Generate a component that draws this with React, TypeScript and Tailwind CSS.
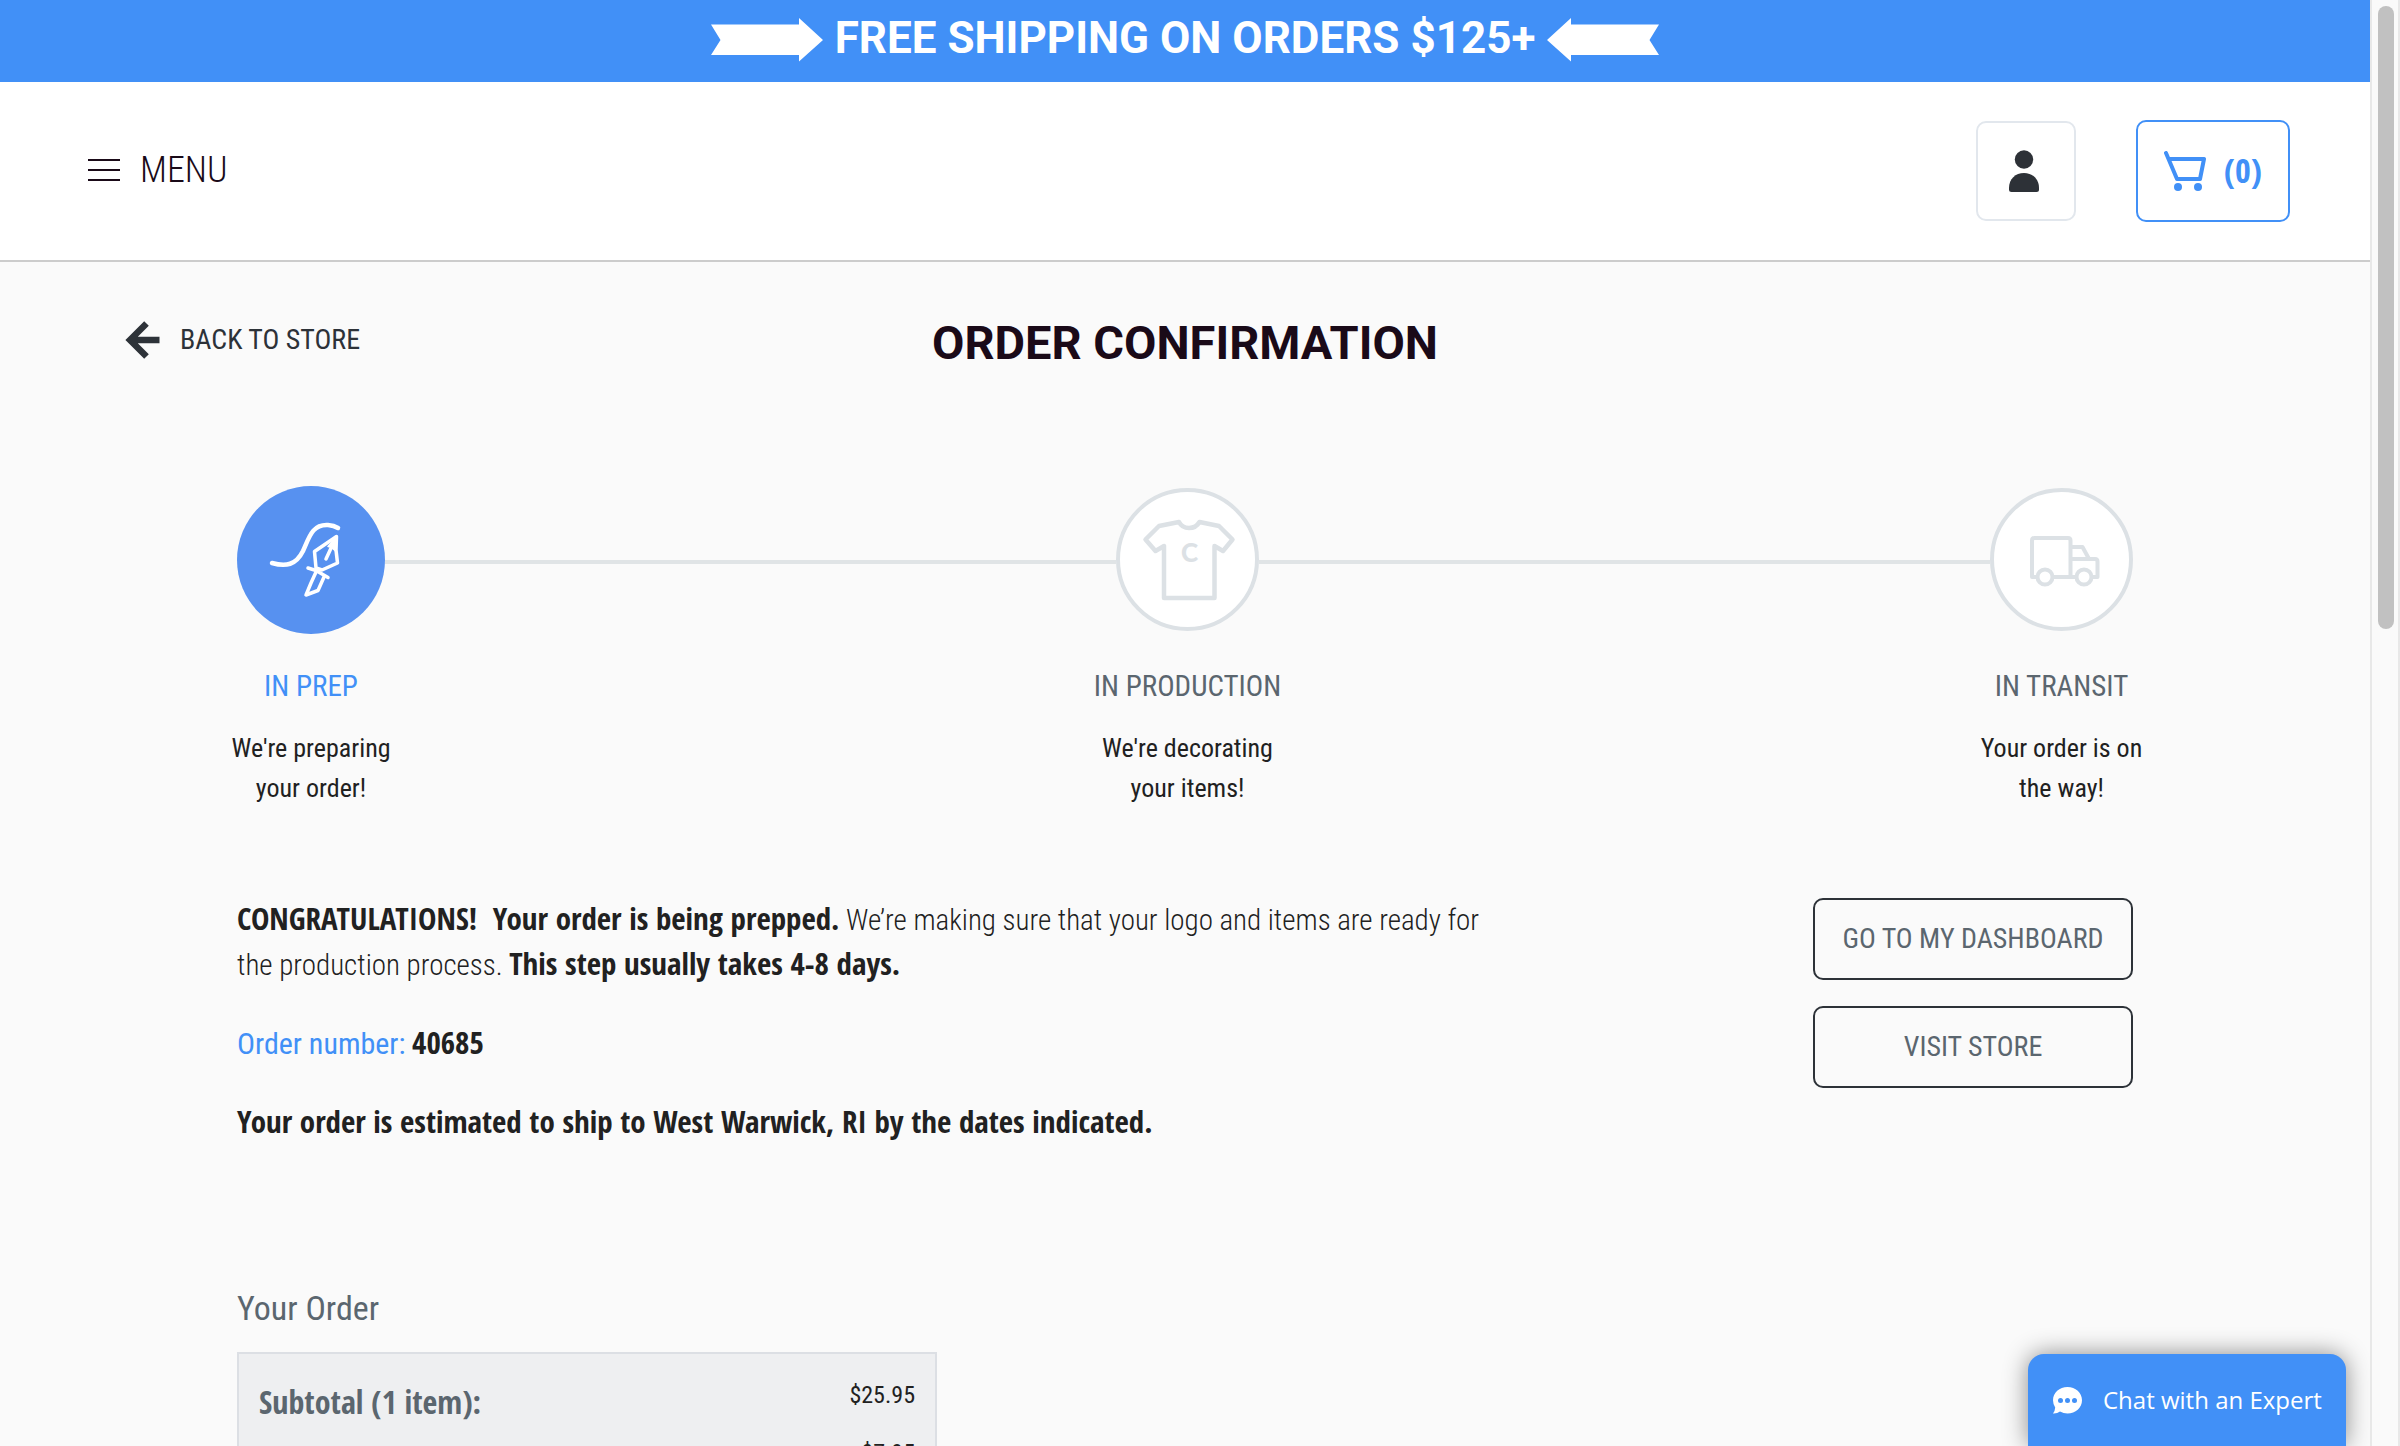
import type { ReactNode } from "react";

const condensed = "font-['Roboto_Condensed','Liberation_Sans',sans-serif]";
const strongText = "font-['Open_Sans_Condensed','Liberation_Sans',sans-serif] font-bold";

function BannerArrow({ flipped = false }: { flipped?: boolean }) {
  return (
    <svg
      width="112"
      height="44"
      viewBox="0 0 112 44"
      fill="#fff"
      aria-hidden="true"
      className={flipped ? "-scale-x-100" : ""}
    >
      <path d="M0 6.5H88V0L112 22L88 43.5V37H0L9.500 22Z" />
    </svg>
  );
}

function PromoBanner() {
  return (
    <div className="flex h-[82px] items-center justify-center gap-3 bg-[#4190f7] pb-[2px]">
      <BannerArrow />
      <p className="pb-1 font-['Roboto',sans-serif] text-[44px] leading-[48px] font-bold text-white">
        FREE SHIPPING ON ORDERS $125+
      </p>
      <BannerArrow flipped />
    </div>
  );
}

function Header() {
  return (
    <header className="flex h-[180px] items-center justify-between border-b-2 border-[#cccccc] bg-white pr-20 pl-[88px]">
      <button type="button" className="flex items-center gap-5 pb-[2px] text-[#1a0a18]">
        <svg width="32" height="22" viewBox="0 0 32 22" fill="currentColor" aria-hidden="true">
          <path d="M0 0H32V2H0ZM0 10H32V12H0ZM0 20H32V22H0Z" />
        </svg>
        <span className="text-[36px] leading-[44px] font-light">MENU</span>
      </button>
      <div className="flex items-center gap-[60px]">
        <button
          type="button"
          aria-label="My account"
          className="flex size-[100px] items-center justify-center rounded-[10px] border-2 border-[#e2e7ed] pr-1"
        >
          <svg width="30" height="42" viewBox="0 0 30 42" fill="#2d3137" aria-hidden="true">
            <circle cx="15" cy="9.500" r="9.200" />
            <path d="M0 38C0 29 6.500 23 15 23S30 29 30 38V39.500Q30 42 27.500 42H2.500Q0 42 0 39.500Z" />
          </svg>
        </button>
        <button
          type="button"
          aria-label="Cart (0)"
          className="flex h-[102px] w-[154px] items-center justify-center gap-[18px] rounded-[10px] border-2 border-[#4190f7] text-[#4190f7]"
        >
          <svg
            width="42"
            height="40"
            viewBox="0 0 42 40"
            fill="none"
            stroke="currentColor"
            strokeWidth="4"
            strokeLinecap="round"
            strokeLinejoin="round"
            aria-hidden="true"
          >
            <path d="M2 2L13 28H36L40 8H5" />
            <circle cx="14" cy="36" r="4" fill="currentColor" stroke="none" />
            <circle cx="34" cy="36" r="4" fill="currentColor" stroke="none" />
          </svg>
          <span className={`pb-[2px] text-[34px] leading-[40px] ${strongText}`}>(0)</span>
        </button>
      </div>
    </header>
  );
}

function PenIcon() {
  return (
    <svg
      width="148"
      height="148"
      viewBox="0 0 148 148"
      fill="none"
      stroke="#fff"
      strokeWidth="4"
      strokeLinecap="round"
      strokeLinejoin="round"
      aria-hidden="true"
    >
      <path d="M35 77C49 81 59 79 66 65C72 52 75 38 91 39Q97 39.500 101 42" strokeWidth="4.500" />
      <path d="M99.500 50.500L77.500 65.500L79 82L85 84L100.500 77L99 64Z" strokeWidth="3.500" />
      <path d="M99.500 51L91 60.500L94 61L98.500 65Z" fill="#fff" strokeWidth="1.500" />
      <path d="M89 73L95 60" strokeWidth="3.500" />
      <path d="M71 82L79 84.500L91 91.500" strokeWidth="3.500" />
      <path d="M79 86L74 97L69 109L81 104.500L87 91" strokeWidth="3.500" />
    </svg>
  );
}

function ShirtIcon() {
  return (
    <svg
      width="143"
      height="143"
      viewBox="0 0 143 143"
      fill="none"
      stroke="#dce1e5"
      strokeWidth="4.500"
      strokeLinecap="round"
      strokeLinejoin="round"
      aria-hidden="true"
      className="shrink-0"
    >
      <path d="M63 34L43 38L29.500 51.500L39.500 63L48 58V110H98.500V58L107 63L116.500 51.500L103 38L83.500 34Q80 40 73 40T63 34Z" />
      <text
        x="73.500"
        y="74"
        textAnchor="middle"
        fill="#dce1e5"
        stroke="none"
        className="font-['Lato',sans-serif] text-[26px] font-black"
      >
        C
      </text>
    </svg>
  );
}

function TruckIcon() {
  return (
    <svg
      width="143"
      height="143"
      viewBox="0 0 143 143"
      fill="none"
      stroke="#dce1e5"
      strokeWidth="4"
      strokeLinecap="round"
      strokeLinejoin="round"
      aria-hidden="true"
      className="shrink-0"
    >
      <path d="M47 89H42V52.500Q42 50 44.500 50H78Q80.500 50 80.500 52.500V89M63 89H86M102 89H107.500V73.500Q107.500 71 105 71H80.500M80.500 59H92.500L98.500 70" />
      <circle cx="55" cy="89" r="7.500" />
      <circle cx="94" cy="89" r="7.500" />
    </svg>
  );
}

type StepProps = { label: string; lines: [string, string]; active?: boolean; children: ReactNode };

function Step({ label, lines, active = false, children }: StepProps) {
  return (
    <li
      className={`flex shrink-0 flex-col items-center text-center whitespace-nowrap ${active ? "w-[148px]" : "w-[143px]"}`}
    >
      <div className="h-[148px]">
        {active ? (
          <div className="size-[148px] rounded-full bg-[#5791f0]">{children}</div>
        ) : (
          <div className="mt-[2px] flex size-[143px] items-center justify-center rounded-full border-4 border-[#dce1e5] bg-white">
            {children}
          </div>
        )}
      </div>
      <p className={`mt-8 text-[29px] leading-[40px] ${active ? "text-[#4190f7]" : "text-[#5b666f]"}`}>
        {label}
      </p>
      <p className="mt-[22px] text-[26px] leading-[40px] text-[#212121]">
        {lines[0]}
        <br />
        {lines[1]}
      </p>
    </li>
  );
}

function StepLine() {
  return <li aria-hidden="true" className="mt-[74px] h-1 flex-1 bg-[#e0e4e6]" />;
}

function Progress() {
  return (
    <ol className="mt-[108px] flex px-[10%]">
      <Step label="IN PREP" lines={["We're preparing", "your order!"]} active>
        <PenIcon />
      </Step>
      <StepLine />
      <Step label="IN PRODUCTION" lines={["We're decorating", "your items!"]}>
        <ShirtIcon />
      </Step>
      <StepLine />
      <Step label="IN TRANSIT" lines={["Your order is on", "the way!"]}>
        <TruckIcon />
      </Step>
    </ol>
  );
}

function ActionButton({ children }: { children: ReactNode }) {
  return (
    <button
      type="button"
      className="h-[82px] w-[320px] rounded-[10px] border-2 border-[#2d3238] text-[28px] leading-[40px] text-[#5b666f]"
    >
      {children}
    </button>
  );
}

function Strong({ children }: { children: ReactNode }) {
  return <strong className={`text-[31px] leading-none ${strongText}`}>{children}</strong>;
}

function OrderMessage() {
  return (
    <section className="mt-[90px] flex items-start justify-between px-[10%]">
      <div className="flex w-[1270px] flex-col gap-[34px] text-[29px] leading-[45px] font-light text-[#212121]">
        <p>
          <Strong>CONGRATULATIONS!&nbsp; Your order is being prepped.</Strong> We’re making sure that your logo and
          items are ready for
          <br />
          the production process. <Strong>This step usually takes 4-8 days.</Strong>
        </p>
        <p>
          <span className="text-[30px] leading-none font-normal text-[#4190f7]">Order number:</span>{" "}
          <Strong>40685</Strong>
        </p>
        <p>
          <Strong>Your order is estimated to ship to West Warwick, RI by the dates indicated.</Strong>
        </p>
      </div>
      <div className="flex flex-col gap-[26px]">
        <ActionButton>GO TO MY DASHBOARD</ActionButton>
        <ActionButton>VISIT STORE</ActionButton>
      </div>
    </section>
  );
}

function OrderSummary() {
  return (
    <section className="mt-[140px] px-[10%]">
      <h2 className="text-[34px] leading-[44px] text-[#5b666f]">Your Order</h2>
      <div className="mt-[22px] flex w-[700px] justify-between border-2 border-[#dcdfe4] bg-[#eeeff1] px-5 pt-3">
        <h3 className={`mt-[14px] text-[32px] leading-[44px] text-[#5b666f] ${strongText}`}>Subtotal (1 item):</h3>
        <ul className="text-right text-[24px] leading-[58px] text-[#212121]">
          <li>$25.95</li>
          <li>$7.95</li>
        </ul>
      </div>
    </section>
  );
}

function ChatButton() {
  return (
    <button
      type="button"
      className="absolute right-6 bottom-0 flex h-[92px] w-[318px] items-center gap-[21px] rounded-t-2xl bg-[#4190f7] pl-[25px] text-white shadow-[0_0_24px_rgba(0,0,0,0.45)]"
    >
      <svg width="29" height="27" viewBox="0 0 29 27" aria-hidden="true">
        <path
          fill="#fff"
          d="M14.500 0C22.500 0 29 5.500 29 13.200S22.500 26.500 14.500 26.500Q10.500 26.500 7 24.500Q4 26.800 0 26.500Q2 24 2.200 20.500Q0 17 0 13.200C0 5.500 6.500 0 14.500 0Z"
        />
        <g fill="#4190f7">
          <circle cx="7.500" cy="13.500" r="2.500" />
          <circle cx="14.500" cy="13.500" r="2.500" />
          <circle cx="21.500" cy="13.500" r="2.500" />
        </g>
      </svg>
      <span className="font-['Open_Sans',sans-serif] text-[24px] leading-[32px] font-medium whitespace-nowrap">
        Chat with an Expert
      </span>
    </button>
  );
}

export default function App() {
  return (
    <div className={`relative flex h-screen overflow-hidden bg-[#fafafa] ${condensed}`}>
      <div className="relative min-w-0 flex-1 overflow-hidden">
        <PromoBanner />
        <Header />
        <main>
          <div className="mt-[46px] grid grid-cols-[1fr_auto_1fr] items-center px-[125px]">
            <a href="#store" className="flex items-center gap-5 pb-[6px] text-[#2d3238]">
              <svg
                width="35"
                height="38"
                viewBox="0 0 35 38"
                fill="none"
                stroke="currentColor"
                strokeWidth="6.500"
                aria-hidden="true"
              >
                <path d="M21.500 2.500L5 19L21.500 35.500M34.500 19H5" />
              </svg>
              <span className="text-[28px] leading-[40px]">BACK TO STORE</span>
            </a>
            <h1 className="font-['Roboto',sans-serif] text-[47px] leading-[70px] font-bold text-[#1a0a18]">
              ORDER CONFIRMATION
            </h1>
          </div>
          <Progress />
          <OrderMessage />
          <OrderSummary />
        </main>
        <ChatButton />
      </div>
      <aside
        aria-hidden="true"
        className="w-[30px] shrink-0 border-x-2 border-[#e8e8e8] bg-[#fafafa] pt-[6px] pl-[6px]"
      >
        <div className="h-[623px] w-4 rounded-full bg-[#c1c1c1]" />
      </aside>
    </div>
  );
}
